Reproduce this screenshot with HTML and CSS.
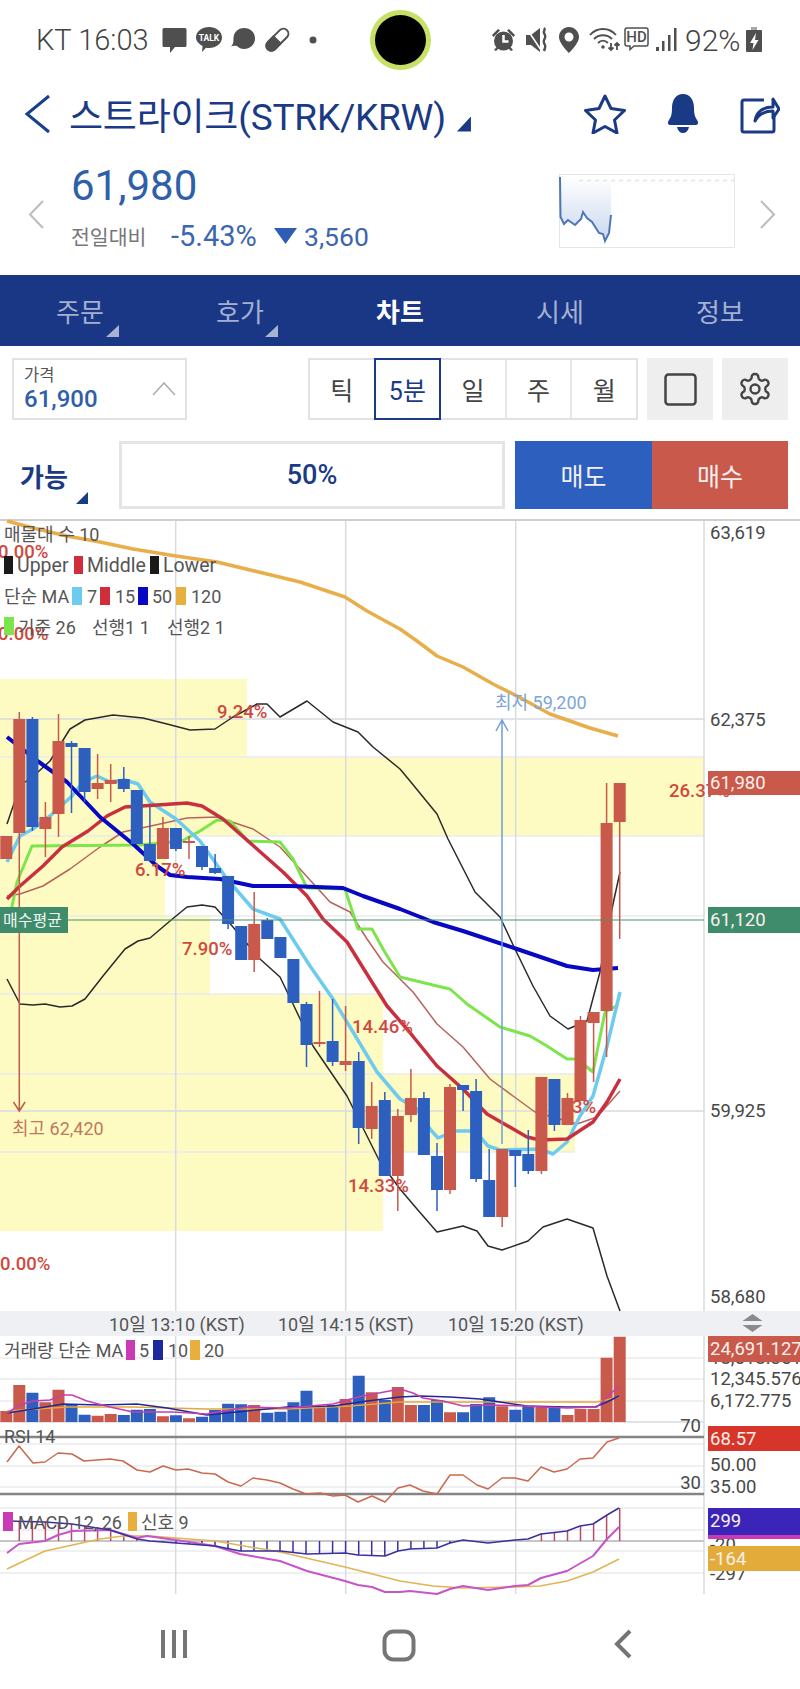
FILE: index.html
```html
<!DOCTYPE html>
<html lang="ko">
<head>
<meta charset="utf-8">
<title>스트라이크 차트</title>
<link rel="stylesheet" href="styles.css">
</head>
<body>
<div class="page">
  <header class="status">
    <div class="status-left">
      <span class="clock">KT 16:03</span>
      <svg class="si" width="26" height="26" viewBox="0 0 26 26"><path class="g" d="M2 1h21a1.500 1.500 0 0 1 1.500 1.500v16a1.500 1.500 0 0 1-1.500 1.500H13l-5 6v-6H2a1.500 1.500 0 0 1-1.500-1.500v-16A1.500 1.500 0 0 1 2 1z"/></svg>
      <svg class="si" width="26" height="26" viewBox="0 0 26 26"><path class="g" d="M13 0c7 0 13 4.300 13 10.500S20 21 13 21c-1 0-2 0-3-.3L6 25l.6-6C2.800 17 0 14 0 10.500 0 4.300 6 0 13 0z"/><text x="13" y="14" class="talk">TALK</text></svg>
      <svg class="si" width="26" height="26" viewBox="0 0 26 26"><path class="g" d="M14 1c6.500 0 11 4.500 11 10.500S20 22 14 22c-3 0-5-1-7-3-2-.5-4-.3-6 .5 2-2 2.500-4 2.500-8C3.500 5.500 8 1 14 1z"/></svg>
      <svg class="si" width="26" height="26" viewBox="0 0 26 26"><g transform="rotate(45 13 13)"><rect x="8" y="-1" width="10" height="27" rx="5" class="pill"/><path class="g" d="M7 12h12v9a6 6 0 0 1-12 0z"/></g></svg>
      <svg class="si" width="26" height="26" viewBox="0 0 26 26"><circle cx="15" cy="13" r="3.500" class="g"/></svg>
    </div>
    <div class="status-right">
      <svg width="35" height="26" viewBox="0 0 35 26"><circle cx="12.500" cy="14" r="9.500" class="g"/><path class="cut" d="M12.500 8v6.500h5"/><path class="g" d="M1 8l6-6 2 1.500-6.500 6.500zM24 8l-6-6-2 1.500 6.500 6.500zM3 23l3-3.500 2 1.500-3 3zM22 23l-3-3.500-2 1.500 3 3z"/></svg>
      <svg width="33" height="26" viewBox="0 0 33 26"><path class="g" d="M0 8h5l9-7v24l-9-7H0z"/><path class="cut-thin" d="M1 2l14 21"/><path class="ln2" d="M18 1c2 2-1 3 0 5 1 2 2 3 1 5-1 2-2 3-1 5 1 2 2 3 1 5l-1 3"/></svg>
      <svg width="29" height="26" viewBox="0 0 29 26"><path class="g" d="M10 0C4.400 0 0 4.500 0 10c0 6.500 10 16 10 16s10-9.500 10-16C20 4.500 15.600 0 10 0zm0 14.500a4.500 4.500 0 1 1 0-9 4.500 4.500 0 0 1 0 9z"/></svg>
      <svg width="36" height="26" viewBox="0 0 36 26"><path class="ln1" d="M2 8c7-8 19-8 26 0M6 12c5-5 13-5 18 0M10 16c3-3 7-3 10 0"/><circle cx="15" cy="20" r="1.800" class="g"/><path class="ln1" d="M23 16v7M20.500 20.500l2.500 2.500 2.500-2.500M29 23v-7M26.500 18.500l2.500-2.500 2.500 2.500"/></svg>
      <svg width="32" height="26" viewBox="0 0 32 26"><path class="lt" d="M3 1h19a2 2 0 0 1 2 2v14a2 2 0 0 1-2 2H10l-4 3.500V19H3a2 2 0 0 1-2-2V3a2 2 0 0 1 2-2z"/><text x="12.500" y="15" class="hd">HD</text></svg>
      <svg width="29" height="26" viewBox="0 0 29 26"><path class="g" d="M0 20h3v4H0zM6 14h2.500v10H6zM12 8h2.500v16H12zM18 1h2.500v23H18z"/></svg>
      <span class="batt-text">92%</span>
      <svg width="18" height="26" viewBox="0 0 18 26"><path class="bcap" d="M5 0h6v3H5z"/><path class="g" d="M1 3h14a1 1 0 0 1 1 1v20a1 1 0 0 1-1 1H1a1 1 0 0 1-1-1V4a1 1 0 0 1 1-1z"/><path class="white" d="M10 6L4 16h3.500l-1 7 6-10H9z"/></svg>
    </div>
  </header>

  <div class="title-row">
    <svg class="back" width="27" height="40" viewBox="0 0 27 40"><path d="M25 2L3 20l22 18"/></svg>
    <h1 class="title">스트라이크(STRK/KRW)</h1>
    <span class="corner title-corner"></span>
    <div class="title-actions">
      <svg class="act" width="42" height="40" viewBox="0 0 42 40"><path d="M21 2l6 12.500 13.500 2-10 9.500 2.500 13L21 32.500 9 39l2.500-13-10-9.500 13.500-2z"/></svg>
      <svg class="act-fill" width="40" height="40" viewBox="0 0 40 40"><path d="M20 0c7 0 11 6 11 14 0 6 1 9 3 12 2 3 1 5-2 5H8c-3 0-4-2-2-5 2-3 3-6 3-12C9 6 13 0 20 0zM14 33h12c-1 4-3 6-6 6s-5-2-6-6z"/></svg>
      <svg class="act" width="40" height="40" viewBox="0 0 40 40"><path d="M24 6H4a2 2 0 0 0-2 2v28a2 2 0 0 0 2 2h28a2 2 0 0 0 2-2V22"/><path d="M15 27c1-9 8-14 18-14V5l6 10-6 9v-7c-8 0-14 3-18 10z"/></svg>
    </div>
  </div>

  <section class="quote">
    <svg class="arrow-side" width="17" height="29" viewBox="0 0 17 29"><path d="M15 1L2 14.500 15 28"/></svg>
    <div class="quote-main">
      <div class="quote-price">61,980</div>
      <div class="quote-delta">
        <span class="delta-label">전일대비</span>
        <span class="delta-pct">-5.43%</span>
        <span class="delta-tri"></span>
        <span class="delta-val">3,560</span>
      </div>
    </div>
    <svg class="spark" width="176" height="74" viewBox="0 0 176 74">
      <defs><linearGradient id="sg" x1="0" y1="0" x2="0" y2="1"><stop offset="0" stop-color="#ffffff"/><stop offset="1" stop-color="#c9d7ee"/></linearGradient></defs>
      <rect x=".5" y=".5" width="175" height="73" class="spark-box"/>
      <path d="M1 3L1.500 43 5 50l4-4 7 5 6-6 2-7 4 6 5 4 7 11 4 1 2 7 4-8 2-18V3z" fill="url(#sg)"/>
      <path d="M20 6.500H175" class="spark-dot"/>
      <path d="M1 3L1.500 43 5 50l4-4 7 5 6-6 2-7 4 6 5 4 7 11 4 1 2 7 4-8 2-18" class="spark-line"/>
    </svg>
    <svg class="arrow-side" width="17" height="29" viewBox="0 0 17 29"><path d="M2 1l13 13.500L2 28"/></svg>
  </section>

  <nav class="tabs">
    <div class="tab tab-menu">주문</div>
    <div class="tab tab-menu">호가</div>
    <div class="tab tab-on">차트</div>
    <div class="tab">시세</div>
    <div class="tab">정보</div>
  </nav>

  <div class="controls">
    <div class="price-box">
      <div class="price-text">
        <div class="price-label">가격</div>
        <div class="price-value">61,900</div>
      </div>
      <svg class="price-up" width="24" height="14" viewBox="0 0 24 14"><path d="M1 13L12 1l11 12"/></svg>
    </div>
    <div class="seg">
      <div class="seg-item">틱</div>
      <div class="seg-item seg-on">5분</div>
      <div class="seg-item">일</div>
      <div class="seg-item">주</div>
      <div class="seg-item">월</div>
    </div>
    <div class="tool"><svg width="33" height="33" viewBox="0 0 33 33"><rect x="1.500" y="1.500" width="30" height="30" rx="3" class="tool-line"/></svg></div>
    <div class="tool"><svg width="36" height="36" viewBox="0 0 24 24"><path class="tool-gear" d="M12.220 2h-.44a2 2 0 0 0-2 2v.18a2 2 0 0 1-1 1.730l-.43.25a2 2 0 0 1-2 0l-.15-.08a2 2 0 0 0-2.730.73l-.22.38a2 2 0 0 0 .73 2.730l.15.1a2 2 0 0 1 1 1.720v.51a2 2 0 0 1-1 1.740l-.15.09a2 2 0 0 0-.73 2.730l.22.38a2 2 0 0 0 2.730.73l.15-.08a2 2 0 0 1 2 0l.43.25a2 2 0 0 1 1 1.730V20a2 2 0 0 0 2 2h.44a2 2 0 0 0 2-2v-.18a2 2 0 0 1 1-1.730l.43-.25a2 2 0 0 1 2 0l.15.08a2 2 0 0 0 2.730-.73l.22-.39a2 2 0 0 0-.73-2.730l-.15-.08a2 2 0 0 1-1-1.740v-.5a2 2 0 0 1 1-1.740l.15-.09a2 2 0 0 0 .73-2.730l-.22-.38a2 2 0 0 0-2.730-.73l-.15.08a2 2 0 0 1-2 0l-.43-.25a2 2 0 0 1-1-1.730V4a2 2 0 0 0-2-2z"/><circle cx="12" cy="12" r="3" class="tool-gear"/></svg></div>
  </div>

  <div class="trade">
    <div class="avail">가능<span class="corner avail-corner"></span></div>
    <div class="pct-box">50%</div>
    <div class="sell">매도</div>
    <div class="buy">매수</div>
  </div>

  <svg class="chart" width="800" height="1080" viewBox="0 520 800 1080">
    <!-- yellow ranges -->
    <path class="range" d="M0 680H247V758H704V837H165V917H210V995H383V1075H575V1153H383V1232H0z"/>
    <!-- grid -->
    <path class="grid-soft" d="M0 758H704M0 837H704M0 917H704M0 995H383M0 1075H575M0 1153H575M0 1359H704M0 1380H704M0 1402H704M0 1445H704M0 1467H704M0 1488H704M0 1509H704M0 1531H704M0 1552H704M0 1574H704"/>
    <path class="grid" d="M0 521H800M175.700 521V1595M345.700 521V1595M515.700 521V1595M704 521V1595M0 720H704M0 1112H704M0 1423H704"/>
    <path class="rule" d="M0 1438H704M0 1495H704"/>
    <path class="zero" d="M0 1542H704"/>
    <rect x="0" y="520" width="800" height="2" class="topline"/>
    <rect x="0" y="1312" width="800" height="25" class="timebar"/>

    <!-- moving averages -->
    <polyline class="ma120" points="7,522 33,529 67,537 100,543 133,550 176,557 217,563 267,575 300,583 345,598 367,612 400,630 417,642 437,657 463,668 493,685 517,697 550,715 590,729 618,737"/>
    <polyline class="boll" points="7,825 20,787 38,773 50,762 70,730 85,721 113,716 143,719 167,725 190,731 215,730 233,718 257,705 267,705 280,718 307,702 333,723 358,733 373,748 400,770 410,782 437,815 448,840 475,893 500,918 515,950 533,987 550,1017 568,1030 587,1022 600,973 613,905 620,873"/>
    <polyline class="boll" points="7,980 20,1005 33,1006 45,1005 60,1008 72,1007 85,1000 103,977 125,950 138,942 150,939 170,922 187,908 202,906 215,908 233,928 260,960 280,978 293,1005 313,1047 347,1097 380,1163 400,1190 417,1210 437,1233 463,1227 477,1232 488,1247 502,1251 528,1242 543,1228 567,1220 593,1229 607,1277 620,1312"/>
    <polyline class="mid" points="7,897 20,895 43,887 70,870 100,848 123,833 160,825 187,819 217,818 253,830 280,848 300,870 330,903 350,913 367,940 383,963 400,980 413,993 437,1025 463,1048 490,1080 513,1097 535,1113 577,1125 597,1118 620,1092"/>
    <polyline class="base" points="10,917 17,883 32,847 140,846 182,842 200,832 217,821 230,822 248,842 280,843 293,860 307,889 345,890 358,930 372,930 383,950 400,978 437,987 450,990 467,1005 500,1028 530,1037 547,1047 567,1060 577,1060 593,1073 605,1013 618,1006"/>
    <polyline class="ma7" points="7,863 20,837 33,830 50,817 72,797 83,783 97,777 110,783 125,781 138,785 150,803 176,820 200,842 227,880 253,910 280,920 310,967 333,1000 353,1033 377,1073 400,1100 417,1110 430,1130 438,1139 455,1132 475,1132 488,1147 500,1151 540,1150 553,1155 567,1143 580,1117 593,1097 607,1047 620,993"/>
    <polyline class="ma15" points="7,900 20,887 43,867 62,848 88,832 107,817 125,808 157,806 187,804 202,807 223,820 257,850 283,873 307,897 323,920 347,943 370,980 387,1007 407,1030 437,1067 463,1090 487,1115 527,1138 540,1141 567,1140 593,1123 607,1103 620,1080"/>
    <polyline class="ma50" points="7,738 39,763 67,783 100,818 133,845 157,867 170,876 187,878 220,880 253,887 290,887 343,889 363,897 400,910 433,923 463,932 517,950 567,967 593,971 618,969"/>

    <!-- candles -->
    <path class="wick-up" d="M19.300 713V834M45.400 803V858M58.500 715V838M97.600 755V800M110.700 765V803M162.900 818V860M189 837V860M254.200 893V973M319.500 992V1048M345.600 1007V1072M371.700 1083V1140M397.800 1110V1212M410.900 1070V1123M450 1085V1195M502.200 1150V1228M541.400 1078V1175M567.500 1094V1126M580.500 1017V1102M593.600 1013V1083M606.600 784V1058M619.700 784V940"/>
    <path class="wick-down" d="M32.400 718V832M71.500 742V814M84.600 749V803M123.800 768V793M149.900 808V862M175.900 829V852M202 847V871M215.100 855V875M228.100 877V930M267.300 919V940M306.500 1003V1068M332.600 1000V1067M358.700 1053V1145M384.800 1093V1177M423.900 1093V1156M437 1144V1212M463.100 1086V1112M476.100 1080V1183M489.200 1150V1218M515.300 1151V1188M528.300 1131V1175M554.400 1080V1132"/>
    <path class="up" d="M.3 837h12V860h-12zM13.300 720h12V834h-12zM39.400 818h12V830h-12zM52.500 742h12V815h-12zM91.600 784h12V790h-12zM104.700 781h12V785h-12zM156.900 829h12V860h-12zM183 842h12V844h-12zM248.200 925h12V961h-12zM313.500 1043h12V1045h-12zM339.600 1062h12V1066h-12zM365.700 1107h12V1130h-12zM391.800 1117h12V1177h-12zM404.900 1099h12V1116h-12zM444 1088h12V1191h-12zM496.200 1150h12V1218h-12zM535.400 1078h12V1172h-12zM561.500 1099h12V1126h-12zM574.500 1021h12V1102h-12zM587.600 1013h12V1024h-12zM600.600 824h12V1012h-12zM613.700 784h12V823h-12z"/>
    <path class="down" d="M26.400 720h12V828h-12zM65.500 744h12V748h-12zM78.600 749h12V793h-12zM117.800 780h12V790h-12zM130.800 791h12V845h-12zM143.900 845h12V862h-12zM169.900 829h12V850h-12zM196 847h12V868h-12zM209.100 869h12V874h-12zM222.100 877h12V925h-12zM235.200 927h12V961h-12zM261.300 921h12V940h-12zM274.400 938h12V959h-12zM287.400 960h12V1004h-12zM300.500 1005h12V1046h-12zM326.600 1042h12V1063h-12zM352.700 1062h12V1129h-12zM378.800 1101h12V1177h-12zM417.900 1099h12V1156h-12zM431 1157h12V1191h-12zM457.100 1086h12V1091h-12zM470.100 1092h12V1180h-12zM483.200 1181h12V1218h-12zM509.300 1151h12V1157h-12zM522.300 1155h12V1172h-12zM548.400 1080h12V1126h-12z"/>

    <!-- average line and high/low arrows -->
    <path class="avg" d="M0 921H704"/>
    <path class="hi" d="M19.300 834V1112M13.500 1103l5.800 9 5.800-9"/>
    <path class="lo" d="M502 1145V721M496 732l6-11 6 11"/>

    <!-- percent labels -->
    <text x="-2" y="553" class="pct">0.00%</text>
    <text x="-2" y="635" class="pct">0.00%</text>
    <text x="217" y="713" class="pct">9.24%</text>
    <text x="135" y="871" class="pct">6.17%</text>
    <text x="182" y="950" class="pct">7.90%</text>
    <text x="352" y="1028" class="pct">14.46%</text>
    <text x="348" y="1187" class="pct">14.33%</text>
    <text x="669" y="792" class="pct">26.37%</text>
    <text x="572" y="1108" class="pct">3%</text>
    <text x="0" y="1265" class="pct">0.00%</text>
    <text x="495" y="703" class="lo-t">최저 59,200</text>
    <text x="12" y="1129" class="hi-t">최고 62,420</text>

    <!-- legends -->
    <text x="4" y="535" class="lg">매물대 수 10</text>
    <rect x="4" y="557" width="9" height="18" class="s-black"/><text x="17" y="566" class="lg-en">Upper</text>
    <rect x="74" y="557" width="9" height="18" class="s-red"/><text x="87" y="566" class="lg-en">Middle</text>
    <rect x="150" y="557" width="9" height="18" class="s-black"/><text x="163" y="566" class="lg-en">Lower</text>
    <text x="4" y="597" class="lg">단순 MA</text>
    <rect x="72" y="588" width="10" height="18" class="s-cyan"/><text x="87" y="597" class="lg">7</text>
    <rect x="100" y="588" width="10" height="18" class="s-red"/><text x="115" y="597" class="lg">15</text>
    <rect x="138" y="588" width="10" height="18" class="s-navy"/><text x="152" y="597" class="lg">50</text>
    <rect x="176" y="588" width="10" height="18" class="s-orange"/><text x="191" y="597" class="lg">120</text>
    <rect x="4" y="618" width="10" height="18" class="s-green"/><text x="18" y="628" class="lg">기준 26</text>
    <text x="92" y="628" class="lg">선행1 1</text>
    <text x="167" y="628" class="lg">선행2 1</text>

    <!-- time axis -->
    <text x="109" y="1325" class="lg-md">10일 13:10 (KST)</text>
    <text x="278" y="1325" class="lg-md">10일 14:15 (KST)</text>
    <text x="448" y="1325" class="lg-md">10일 15:20 (KST)</text>
    <path class="updown" d="M752.500 1315l10 7h-20zM752.500 1333l-10-7h20z"/>

    <!-- volume -->
    <path class="up" d="M.3 1412h12V1423h-12zM13.300 1386h12V1423h-12zM39.400 1403.300h12V1423h-12zM52.500 1390.700h12V1423h-12zM91.600 1416.700h12V1423h-12zM104.700 1415h12V1423h-12zM156.900 1417.300h12V1423h-12zM183 1419.300h12V1423h-12zM248.200 1406h12V1423h-12zM313.500 1408.300h12V1423h-12zM339.600 1400h12V1423h-12zM365.700 1393.300h12V1423h-12zM391.800 1388h12V1423h-12zM404.900 1406h12V1423h-12zM444 1413.300h12V1423h-12zM496.200 1407.300h12V1423h-12zM535.400 1407.300h12V1423h-12zM561.500 1416h12V1423h-12zM574.500 1410h12V1423h-12zM587.600 1410h12V1423h-12zM600.600 1358.700h12V1423h-12zM613.700 1337.700h12V1423h-12z"/>
    <path class="down" d="M26.400 1393.700h12V1423h-12zM65.500 1406h12V1423h-12zM78.600 1415.700h12V1423h-12zM117.800 1416h12V1423h-12zM130.800 1410.700h12V1423h-12zM143.900 1410h12V1423h-12zM169.900 1416.300h12V1423h-12zM196 1417.700h12V1423h-12zM209.100 1411h12V1423h-12zM222.100 1404.700h12V1423h-12zM235.200 1405.300h12V1423h-12zM261.300 1413.700h12V1423h-12zM274.400 1412.700h12V1423h-12zM287.400 1403.300h12V1423h-12zM300.500 1391.700h12V1423h-12zM326.600 1406h12V1423h-12zM352.700 1376.700h12V1423h-12zM378.800 1401h12V1423h-12zM417.900 1406h12V1423h-12zM431 1401h12V1423h-12zM457.100 1413.300h12V1423h-12zM470.100 1405h12V1423h-12zM483.200 1398.300h12V1423h-12zM509.300 1410.700h12V1423h-12zM522.300 1406.700h12V1423h-12zM548.400 1408.300h12V1423h-12z"/>
    <polyline class="v20" points="7,1412 67,1408 133,1408 207,1410 287,1410 350,1407 400,1403 433,1403 500,1403 567,1403 597,1403 619,1398"/>
    <polyline class="v10" points="7,1414 33,1410 63,1405 100,1406 137,1405 167,1409 207,1416 247,1412 287,1408 333,1407 367,1402 400,1398 420,1397 450,1398 480,1400 500,1403 527,1407 567,1408 595,1408 607,1403 619,1397"/>
    <polyline class="v5" points="7,1414 20,1406 33,1402 50,1401 63,1396 72,1396 87,1402 110,1408 133,1413 173,1413 207,1415 247,1408 287,1409 333,1405 358,1398 400,1390 413,1394 423,1399 443,1402 463,1407 490,1406 523,1407 567,1409 597,1408 607,1398 619,1387"/>
    <text x="4" y="1351" class="lg">거래량 단순 MA</text>
    <rect x="126" y="1341" width="9" height="20" class="s-magenta"/><text x="139" y="1351" class="lg">5</text>
    <rect x="153" y="1341" width="10" height="20" class="s-navy2"/><text x="168" y="1351" class="lg">10</text>
    <rect x="190" y="1341" width="10" height="20" class="s-orange"/><text x="204" y="1351" class="lg">20</text>

    <!-- RSI -->
    <polyline class="rsi" points="7,1463 19,1447 33,1464 45,1463 58,1454 72,1455 84,1462 110,1460 123,1462 137,1471 150,1473 163,1467 176,1471 188,1470 202,1474 215,1475 228,1483 241,1487 253,1479 267,1481 280,1484 293,1490 306,1495 320,1494 333,1497 345,1496 358,1503 372,1497 385,1503 398,1489 410,1486 423,1492 437,1495 450,1476 463,1476 477,1486 488,1490 502,1479 515,1479 528,1482 541,1468 554,1473 567,1470 580,1460 593,1459 607,1443 619,1439"/>
    <text x="4" y="1437" class="lg">RSI 14</text>
    <text x="701" y="1427" class="ax-end">70</text>
    <text x="701" y="1484" class="ax-end">30</text>

    <!-- MACD -->
    <path class="hist-up" d="M19.300 1542V1523M32.400 1542V1522M45.400 1542V1523M58.500 1542V1524M71.500 1542V1525M84.600 1542V1527M97.600 1542V1528M110.700 1542V1531M123.800 1542V1535M136.800 1542V1540M541.400 1542V1535M554.400 1542V1534M567.500 1542V1532M580.500 1542V1527M593.600 1542V1525M606.600 1542V1516M619.700 1542V1509"/>
    <path class="hist-down" d="M163 1542V1543M176 1542V1544M189 1542V1545M202 1542V1546M215 1542V1547M228 1542V1549M241 1542V1552M254 1542V1552M267 1542V1552M280 1542V1552M293 1542V1553M306 1542V1555M319.500 1542V1555M332.600 1542V1555M345.600 1542V1554M358.700 1542V1556M371.700 1542V1556M384.800 1542V1557M397.800 1542V1552M410.900 1542V1550M423.900 1542V1549M437 1542V1549M450 1542V1544"/>
    <polyline class="signal" points="7,1570 45,1552 100,1540 123,1537 150,1537 215,1542 280,1553 345,1568 400,1582 433,1587 463,1589 515,1588 540,1587 567,1582 593,1573 619,1560"/>
    <polyline class="macd" points="7,1554 19,1545 45,1542 58,1536 72,1532 110,1531 137,1539 147,1537 176,1541 215,1547 240,1555 280,1562 307,1572 345,1582 358,1586 372,1588 385,1593 400,1593 410,1592 437,1595 450,1590 463,1587 488,1591 515,1587 528,1586 541,1579 567,1572 593,1557 607,1540 619,1528"/>
    <polyline class="macd-b" points="7,1522 45,1523 72,1525 110,1531 137,1540 150,1542 176,1544 215,1547 240,1552 280,1552 307,1555 345,1554 358,1556 385,1557 398,1552 410,1550 437,1549 450,1544 463,1541 488,1544 515,1541 528,1540 541,1535 567,1532 580,1527 593,1525 607,1516 619,1509"/>
    <rect x="3" y="1513" width="10" height="19" class="s-magenta"/><text x="18" y="1523" class="lg">MACD 12, 26</text>
    <rect x="128" y="1513" width="9" height="19" class="s-orange"/><text x="141" y="1523" class="lg">신호 9</text>

    <!-- right axis -->
    <text x="710" y="534" class="ax">63,619</text>
    <text x="710" y="721" class="ax">62,375</text>
    <text x="710" y="1112" class="ax">59,925</text>
    <text x="710" y="1298" class="ax">58,680</text>
    <text x="710" y="1359" class="ax">18,518.351</text>
    <text x="710" y="1380" class="ax">12,345.576</text>
    <text x="710" y="1402" class="ax">6,172.775</text>
    <text x="710" y="1466" class="ax">50.00</text>
    <text x="710" y="1488" class="ax">35.00</text>
    <text x="710" y="1546" class="ax">-20</text>
    <text x="710" y="1575" class="ax">-297</text>

    <rect x="708" y="772" width="92" height="24" class="b-up"/><text x="710" y="784" class="ax-w">61,980</text>
    <rect x="0" y="908" width="68" height="26" class="b-green"/><text x="3" y="921" class="ax-w2">매수평균</text>
    <rect x="708" y="908" width="92" height="26" class="b-green"/><text x="710" y="921" class="ax-w">61,120</text>
    <rect x="708" y="1337" width="92" height="26" class="b-up"/><text x="710" y="1350" class="ax-w">24,691.127</text>
    <rect x="708" y="1427" width="92" height="25" class="b-rsi"/><text x="710" y="1440" class="ax-w">68.57</text>
    <rect x="708" y="1535" width="92" height="5" class="s-magenta"/>
    <rect x="708" y="1509" width="92" height="27" class="b-macd"/><text x="710" y="1522" class="ax-w">299</text>
    <rect x="708" y="1547" width="92" height="25" class="b-signal"/><text x="710" y="1560" class="ax-w">-164</text>
  </svg>

  <footer class="navbar">
    <svg class="nav-icon" width="28" height="30" viewBox="0 0 28 30"><path d="M3 1v28M14 1v28M25 1v28"/></svg>
    <svg class="nav-icon" width="34" height="33" viewBox="0 0 34 33"><rect x="2.500" y="2.500" width="29" height="28" rx="9"/></svg>
    <svg class="nav-icon" width="18" height="30" viewBox="0 0 18 30"><path d="M16 2L3 15l13 13"/></svg>
  </footer>
  <div class="camera"></div>
</div>
</body>
</html>
```
FILE: styles.css
```css
* { box-sizing: border-box; }
html, body { margin: 0; padding: 0; background: #fff; }
body { font-family: Roboto, "Noto Sans CJK KR", sans-serif; color: #444; }
.page { position: relative; width: 800px; height: 1689px; overflow: hidden; }

/* status bar */
.status { height: 78px; display: flex; align-items: center; padding: 2px 36px 0 36px; }
.status-left { display: flex; align-items: center; gap: 8px; }
.clock { font-size: 29px; font-weight: 300; color: #444; margin-right: 4px; width: 114px; white-space: nowrap; }
.status-right { display: flex; align-items: center; margin-left: auto; }
.batt-text { font-size: 30px; font-weight: 300; color: #444; width: 61px; white-space: nowrap; }
.g { fill: #4f4f4f; }
.white { fill: #fff; }
.bcap { fill: #a8a8a8; }
.cut { fill: none; stroke: #fff; stroke-width: 2.500; }
.cut-thin { fill: none; stroke: #fff; stroke-width: 1.500; }
.ln1 { fill: none; stroke: #4f4f4f; stroke-width: 1.800; }
.ln2 { fill: none; stroke: #4f4f4f; stroke-width: 2.500; }
.lt { fill: none; stroke: #4f4f4f; stroke-width: 1.500; }
.pill { fill: #fff; stroke: #4f4f4f; stroke-width: 2; }
.talk { fill: #fff; font-size: 8.500px; font-weight: 700; text-anchor: middle; }
.hd { fill: #4f4f4f; font-size: 15px; font-weight: 500; text-anchor: middle; }
.camera { position: absolute; left: 370px; top: 10px; width: 61px; height: 60px; border-radius: 50%; background: #000; border: 5px solid #c6e166; }

/* title */
.title-row { height: 72px; display: flex; align-items: center; padding-left: 24px; }
.back path { fill: none; stroke: #1b3f8f; stroke-width: 3; }
.title { margin: 0 0 0 18px; font-size: 37px; font-weight: 400; color: #1a3a85; white-space: nowrap; letter-spacing: -.2px; }
.corner { display: block; background: #1a3a85; clip-path: polygon(100% 0, 100% 100%, 0 100%); }
.title-corner { width: 14px; height: 15px; margin: 20px 0 0 11px; }
.title-actions { display: flex; align-items: center; gap: 37px; margin-left: auto; padding-right: 20px; }
.act path { fill: none; stroke: #1a3a85; stroke-width: 3; stroke-linejoin: round; }
.act-fill path { fill: #1a3a85; }

/* quote */
.quote { height: 125px; display: flex; align-items: flex-start; padding: 24px 24px 0 28px; }
.arrow-side { margin-top: 26px; }
.arrow-side path { fill: none; stroke: #bcbcbc; stroke-width: 2; }
.quote-main { margin-left: 26px; flex: 1; }
.quote-price { font-size: 42px; line-height: 24px; height: 44px; color: #2f5fa8; }
.quote-delta { display: flex; align-items: center; height: 40px; margin-top: -2px; }
.delta-label { font-size: 20.500px; color: #777; width: 100px; }
.delta-pct { font-size: 29px; color: #3c66b0; width: 103px; }
.delta-tri { width: 23px; height: 16px; background: #2f5db5; clip-path: polygon(0 0, 100% 0, 50% 100%); margin-right: 7px; }
.delta-val { font-size: 26.500px; color: #3c66b0; }
.spark { margin-right: 24px; }
.spark-box { fill: #fff; stroke: #e6e6e6; }
.spark-dot { stroke: #e4e4e4; stroke-dasharray: 4 4; stroke-width: 1.500; fill: none; }
.spark-line { fill: none; stroke: #4c76b8; stroke-width: 2; }

/* tabs */
.tabs { height: 71px; display: flex; background: #1a3785; }
.tab { position: relative; flex: 1; display: flex; align-items: center; justify-content: center; font-size: 26px; color: #a3b0d2; }
.tab-on { color: #fff; font-weight: 700; }
.tab-menu::after { content: ""; position: absolute; left: 106px; top: 50px; width: 13px; height: 12px; background: #a7b3d3; clip-path: polygon(100% 0, 100% 100%, 0 100%); }
.tab-menu + .tab-menu::after { left: 105px; }

/* controls */
.controls { display: flex; padding: 12px 12px 0; height: 74px; }
.price-box { width: 175px; height: 62px; border: 2px solid #e2e2e2; display: flex; align-items: center; padding-left: 10px; }
.price-text { flex: 1; }
.price-label { font-size: 16.500px; line-height: 20px; color: #555; }
.price-value { font-size: 24px; line-height: 26px; color: #2f5fa8; font-weight: 500; }
.price-up { margin-right: 9px; }
.price-up path { fill: none; stroke: #aaa; stroke-width: 1.500; }
.seg { display: flex; width: 330px; height: 62px; margin-left: 121px; border: 2px solid #e2e2e2; }
.seg-item { flex: 1; display: flex; align-items: center; justify-content: center; font-size: 25px; color: #444; border-left: 2px solid #e8e8e8; }
.seg-item:first-child { border-left: 0; }
.seg-on { color: #1a3a85; border: 2px solid #1a3a85; margin: -2px 0; }
.seg-on + .seg-item { border-left: 0; }
.tool { width: 66px; height: 62px; background: #eee; display: flex; align-items: center; justify-content: center; margin-left: 9px; }
.tool-line { fill: none; stroke: #444; stroke-width: 2.500; }
.tool-gear { fill: none; stroke: #444; stroke-width: 1.600; }

/* trade */
.trade { display: flex; align-items: stretch; padding: 21px 12px 0 0; height: 99px; }
.avail { position: relative; width: 119px; padding-left: 20px; display: flex; align-items: center; font-size: 26px; font-weight: 700; color: #1a3a85; height: 68px; }
.avail-corner { position: absolute; left: 76px; top: 51px; width: 12px; height: 12px; }
.pct-box { width: 386px; height: 68px; border: 3px solid #e4e4e4; display: flex; align-items: center; justify-content: center; font-size: 27px; font-weight: 500; color: #1a3a85; }
.sell, .buy { height: 68px; display: flex; align-items: center; justify-content: center; font-size: 25px; color: #f4f0f0; }
.sell { width: 137px; margin-left: 10px; background: #2d5fbe; }
.buy { width: 136px; background: #c8594b; }

/* chart */
.chart { display: block; font-family: Roboto, "Noto Sans CJK KR", sans-serif; }
.chart text { dominant-baseline: central; }
.range { fill: #fefbc2; }
.grid { fill: none; stroke: #d8dbe0; stroke-width: 1.500; }
.grid-soft { fill: none; stroke: #e9ebee; stroke-width: 1.500; }
.rule { stroke: #858585; stroke-width: 2.500; fill: none; }
.zero { stroke: #c6c6c6; stroke-width: 2; fill: none; }
.topline { fill: #cfcfcf; }
.timebar { fill: #eef0f4; }
polyline { fill: none; stroke-linejoin: round; }
.ma120 { stroke: #e8ae4a; stroke-width: 3.500; }
.boll { stroke: #2a2a2a; stroke-width: 1.500; }
.mid { stroke: #b8635c; stroke-width: 1.500; }
.base { stroke: #7ce54c; stroke-width: 3; }
.ma7 { stroke: #6ccbee; stroke-width: 3.500; }
.ma15 { stroke: #c9303f; stroke-width: 3.500; }
.ma50 { stroke: #0808c4; stroke-width: 4; }
.up { fill: #c8594b; }
.down { fill: #2d5fbe; }
.wick-up { stroke: #c8594b; stroke-width: 1.500; fill: none; }
.wick-down { stroke: #2d5fbe; stroke-width: 1.500; fill: none; }
.avg { stroke: #4a8f70; stroke-width: 1.200; fill: none; }
.hi { stroke: #bf5a50; stroke-width: 1.500; fill: none; }
.lo { stroke: #6f9fd8; stroke-width: 1.500; fill: none; }
.pct { fill: #cf4a3e; font-size: 18.500px; font-weight: 500; }
.lo-t { fill: #7ba6da; font-size: 18px; }
.hi-t { fill: #c0785e; font-size: 18px; }
.lg { fill: #555; font-size: 18px; }
.lg-en { fill: #555; font-size: 19.500px; }
.lg-md { fill: #555; font-size: 18px; }
.ax { fill: #484848; font-size: 18.500px; }
.ax-end { fill: #484848; font-size: 18.500px; text-anchor: end; }
.ax-w { fill: #fbf0ea; font-size: 18.500px; }
.ax-w2 { fill: #f2f7f4; font-size: 16px; }
.s-black { fill: #1a1a1a; }
.s-red { fill: #cf2e3a; }
.s-cyan { fill: #6ccbee; }
.s-navy { fill: #0808c4; }
.s-navy2 { fill: #1a2a9c; }
.s-orange { fill: #e8ae3e; }
.s-green { fill: #7ce54c; }
.s-magenta { fill: #c93ab4; }
.updown { fill: #8a8a8a; }
.v5 { stroke: #c53fb2; stroke-width: 1.500; }
.v10 { stroke: #22289c; stroke-width: 1.500; }
.v20 { stroke: #e2a83e; stroke-width: 1.500; }
.rsi { stroke: #c96a50; stroke-width: 1.500; }
.hist-up { stroke: #b84a6a; stroke-width: 1.500; fill: none; }
.hist-down { stroke: #3a30a0; stroke-width: 1.500; fill: none; }
.signal { stroke: #e2b452; stroke-width: 1.500; }
.macd { stroke: #c555c8; stroke-width: 2; }
.macd-b { stroke: #3a30a0; stroke-width: 1.500; }
.b-up { fill: #c8594b; }
.b-green { fill: #3f8c6c; }
.b-rsi { fill: #d8352a; }
.b-macd { fill: #3a25b8; }
.b-signal { fill: #e3ab3a; }

/* navigation bar */
.navbar { height: 89px; display: flex; align-items: flex-start; justify-content: flex-start; padding: 30px 0 0 160px; }
.nav-icon { fill: none; stroke: #757575; stroke-width: 4; }
.nav-icon:nth-child(1) { margin-right: 194px; }
.nav-icon:nth-child(2) { margin-right: 198px; }
```
